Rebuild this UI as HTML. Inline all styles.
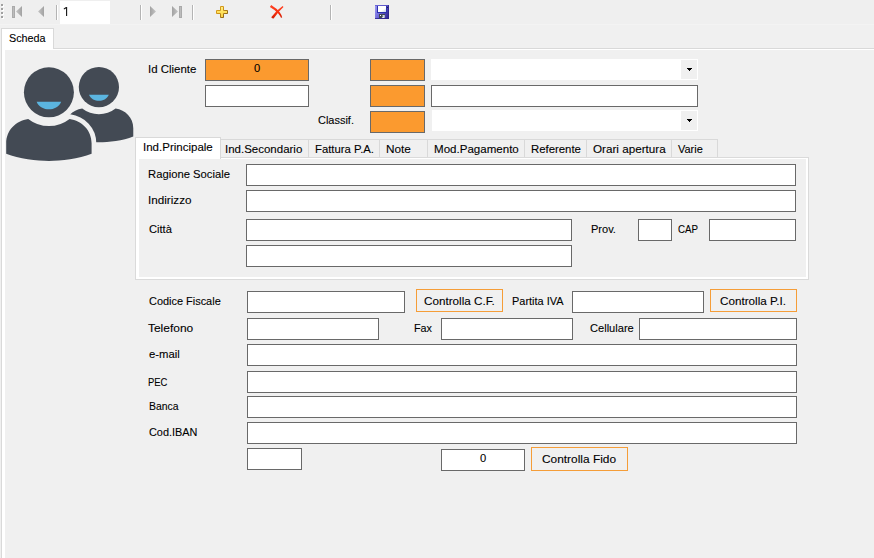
<!DOCTYPE html>
<html>
<head>
<meta charset="utf-8">
<title>Scheda Cliente</title>
<style>
html,body{margin:0;padding:0;}
html{width:874px;height:558px;overflow:hidden;}
body{width:874px;height:558px;overflow:hidden;background:#f0f0f0;position:relative;
  font-family:"Liberation Sans",sans-serif;font-size:11.5px;color:#000;}
.a{position:absolute;box-sizing:border-box;}
.lbl{position:absolute;white-space:nowrap;font-size:11.5px;line-height:20px;height:20px;transform-origin:0 0;color:#000;-webkit-text-stroke:0.1px #000;}
.inp{position:absolute;box-sizing:border-box;background:#fff;border:1px solid #696969;}
.org{position:absolute;box-sizing:border-box;background:#fb9a2f;border:1px solid #696969;}
.btn{position:absolute;box-sizing:border-box;background:#f0f0f0;border:1px solid #f59d38;}
.cmb{position:absolute;box-sizing:border-box;background:#fff;}
.cmb i{position:absolute;right:1px;top:1px;width:16px;bottom:1px;background:#f0f0f0;}
.cmb svg{position:absolute;right:6px;top:9px;}
.tab{position:absolute;box-sizing:border-box;top:139px;height:18px;border-top:1px solid #d9d9d9;border-right:1px solid #d9d9d9;background:#f0f0f0;}
.sep{position:absolute;top:5px;width:1px;height:15px;background:#b4b4b4;box-shadow:1px 0 0 #fff;}
svg{position:absolute;overflow:visible;}
</style>
</head>
<body>
<!-- toolbar -->
<div class="a" id="toolbar" style="left:0;top:0;width:874px;height:25px;background:#efefef;border-bottom:1px solid #f3f3f3;"></div>
<svg id="grip" style="left:0;top:0" width="6" height="24" viewBox="0 0 6 24">
 <g fill="#fff"><rect x="2" y="5" width="2" height="2"/><rect x="2" y="9" width="2" height="2"/><rect x="2" y="13" width="2" height="2"/><rect x="2" y="17" width="2" height="2"/></g>
 <g fill="#a0a0a0"><rect x="1" y="4" width="2" height="2"/><rect x="1" y="8" width="2" height="2"/><rect x="1" y="12" width="2" height="2"/><rect x="1" y="16" width="2" height="2"/></g>
</svg>
<svg id="nav" style="left:0;top:0" width="200" height="24" viewBox="0 0 200 24">
 <defs>
  <linearGradient id="gg" x1="0" y1="0" x2="1" y2="0"><stop offset="0" stop-color="#c4c4c4"/><stop offset="1" stop-color="#a2a2a2"/></linearGradient>
  <linearGradient id="gh" x1="0" y1="0" x2="1" y2="0"><stop offset="0" stop-color="#a2a2a2"/><stop offset="1" stop-color="#c4c4c4"/></linearGradient>
 </defs>
 <rect x="12" y="6" width="3" height="12" fill="#aaa"/><rect x="13" y="7" width="1" height="10" fill="#bcbcbc"/>
 <path d="M16 11.5 L22 6 L22 17 Z" fill="url(#gg)"/>
 <path d="M38 11.5 L44 6 L44 17 Z" fill="url(#gg)"/>
 <path d="M156 11.5 L150 6 L150 17 Z" fill="url(#gh)"/>
 <path d="M178 11.5 L172 6 L172 17 Z" fill="url(#gh)"/>
 <rect x="179" y="6" width="3" height="12" fill="#aaa"/><rect x="180" y="7" width="1" height="10" fill="#bcbcbc"/>
</svg>
<div class="a" style="left:60px;top:1px;width:50px;height:23px;background:#fff;"></div>
<svg id="one" style="left:60px;top:1px" width="20" height="22" viewBox="60 1 20 22"><path d="M66 7h1.15v9h-1.15v-7.55l-2 1.05l-.35-.9z" fill="#1c1c1c"/></svg>
<div class="sep" style="left:56px;"></div>
<div class="sep" style="left:140px;"></div>
<div class="sep" style="left:192px;"></div>
<div class="sep" style="left:330px;"></div>
<svg id="plus" style="left:216px;top:6px" width="12" height="12" viewBox="0 0 12 12">
 <defs><linearGradient id="gp" x1="0" y1="0" x2="0" y2="1"><stop offset="0" stop-color="#fff08a"/><stop offset="0.5" stop-color="#ffe25c"/><stop offset="1" stop-color="#fad043"/></linearGradient>
 <linearGradient id="gpb" x1="0" y1="0" x2="1" y2="1"><stop offset="0" stop-color="#e3a51c"/><stop offset="0.45" stop-color="#c98f1a"/><stop offset="1" stop-color="#6f5216"/></linearGradient></defs>
 <path d="M4.5 .5h3v4h4v3h-4v4h-3v-4h-4v-3h4z" fill="url(#gp)" stroke="url(#gpb)" stroke-width="1" stroke-linejoin="miter"/>
</svg>
<svg id="del" style="left:262px;top:0" width="30" height="24" viewBox="262 0 30 24">
 <defs><linearGradient id="gr" x1="0" y1="0" x2="0" y2="1"><stop offset="0" stop-color="#ff4527"/><stop offset="0.55" stop-color="#f8300f"/><stop offset="1" stop-color="#cf1c02"/></linearGradient></defs>
 <path d="M269.9 7.0 L271.2 4.9 Q276.8 8.4 279.7 12.2 Q282.1 15.4 282.2 17.5 L281.0 17.8 Q280.3 15.8 278.2 13.4 Q275 9.9 269.9 7.0 Z" fill="url(#gr)"/>
 <path d="M282.6 5.9 L283.5 6.9 Q278.2 11.6 273.6 18.4 Q272.6 18.7 271.2 17.2 Q275.4 11 282.6 5.9 Z" fill="url(#gr)"/>
</svg>
<svg id="save" style="left:374px;top:4px" width="16" height="16" viewBox="374 4 16 16">
 <defs><linearGradient id="gs" x1="0" y1="0.2" x2="1" y2="0.6"><stop offset="0" stop-color="#9894f0"/><stop offset="0.45" stop-color="#6a63d6"/><stop offset="1" stop-color="#332a98"/></linearGradient>
 <linearGradient id="gw" x1="0" y1="0" x2="1" y2="1"><stop offset="0" stop-color="#fff"/><stop offset="0.6" stop-color="#fff"/><stop offset="1" stop-color="#c5d2ea"/></linearGradient></defs>
 <rect x="375" y="5" width="14" height="14" fill="url(#gs)"/>
 <rect x="375" y="5" width="14" height="1" fill="#5a53c8" fill-opacity=".7"/>
 <rect x="375" y="18" width="14" height="1" fill="#2a2288" fill-opacity=".8"/>
 <rect x="388" y="5" width="1" height="14" fill="#2a2288" fill-opacity=".7"/>
 <rect x="377" y="6" width="10" height="7" fill="#2b30ab"/>
 <rect x="378" y="6" width="8" height="6" fill="url(#gw)"/>
 <rect x="387" y="7" width="1" height="1" fill="#1d1a5e"/>
 <rect x="379" y="14" width="6" height="4" fill="#3e4852"/>
 <path d="M384.6 15 v3 h-3 z" fill="#e4eaf4"/><rect x="382.5" y="15" width="2" height="1.5" fill="#cfd8e6"/>
 <rect x="380" y="15" width="1" height="1" fill="#fff"/>
</svg>

<!-- outer tab control -->
<div class="a" id="page" style="left:1px;top:48px;width:873px;height:510px;background:#fff;border:1px solid #d9d9d9;border-right:none;border-bottom:none;"></div>
<div class="a" id="panel" style="left:5px;top:50px;width:869px;height:508px;background:#f0f0f0;"></div>
<div class="a" id="tab1" style="left:1px;top:28px;width:53px;height:21px;background:#fff;border:1px solid #d9d9d9;border-bottom:none;"></div>

<!-- users icon -->
<svg id="users" style="left:5px;top:60px;overflow:hidden" width="135" height="105" viewBox="5 60 135 105">
 <defs>
  <g id="person">
   <circle cx="0" cy="0" r="25"/>
   <path d="M-20.7 26.7 C-33 28.5 -42.7 38 -42.7 51 L-42.7 61.5 C-30 66.8 -12 68.6 0 68.6 C12 68.6 30 66.8 42.7 61.5 L42.7 51 C42.7 38 33 28.5 20.7 26.7 A33.7 33.7 0 0 1 -20.7 26.7 Z"/>
  </g>
  <path id="smile" d="M-12.3 9.4 L12.3 9.4 C10 14.8 5 17 0 17 C-5 17 -10 14.8 -12.3 9.4 Z"/>
 </defs>
 <g transform="translate(98.9 87.1) scale(0.805)"><use href="#person" fill="#434a54"/><use href="#smile" fill="#5bb5e0"/></g>
 <g transform="translate(48.9 92.3)"><use href="#person" fill="#f0f0f0" stroke="#f0f0f0" stroke-width="9.4" stroke-linejoin="round"/><use href="#person" fill="#434a54"/><use href="#smile" fill="#5bb5e0"/></g>
</svg>

<!-- header fields -->
<div class="org" style="left:205px;top:59px;width:104px;height:22px;"></div>
<div class="inp" style="left:205px;top:85px;width:104px;height:22px;"></div>
<div class="org" style="left:370px;top:59px;width:55px;height:22px;"></div>
<div class="org" style="left:370px;top:85px;width:55px;height:22px;"></div>
<div class="org" style="left:370px;top:111px;width:55px;height:22px;"></div>
<div class="cmb" style="left:431px;top:59px;width:267px;height:21px;"><i></i><svg width="5" height="3" viewBox="0 0 5 3" shape-rendering="crispEdges"><path d="M0 0h5v1h-1v1h-1v1h-1v-1h-1v-1h-1z" fill="#000"/></svg></div>
<div class="inp" style="left:431px;top:85px;width:267px;height:22px;"></div>
<div class="cmb" style="left:432px;top:110px;width:266px;height:21px;"><i></i><svg width="5" height="3" viewBox="0 0 5 3" shape-rendering="crispEdges"><path d="M0 0h5v1h-1v1h-1v1h-1v-1h-1v-1h-1z" fill="#000"/></svg></div>

<!-- inner tab control -->
<div class="a" id="ipage" style="left:135px;top:157px;width:674px;height:123px;background:#fff;border:1px solid #dadada;"></div>
<div class="a" id="ipanel" style="left:139px;top:159px;width:667px;height:118px;background:#f0f0f0;"></div>
<div class="tab" style="left:220px;width:89px;"></div>
<div class="tab" style="left:309px;width:71px;"></div>
<div class="tab" style="left:380px;width:48px;"></div>
<div class="tab" style="left:428px;width:97px;"></div>
<div class="tab" style="left:525px;width:62px;"></div>
<div class="tab" style="left:587px;width:85px;"></div>
<div class="tab" style="left:672px;width:46px;"></div>
<div class="a" id="itab1" style="left:135px;top:137px;width:86px;height:22px;background:#fff;border:1px solid #d9d9d9;border-bottom:none;"></div>

<div class="inp" style="left:246px;top:164px;width:550px;height:22px;"></div>
<div class="inp" style="left:246px;top:190px;width:550px;height:22px;"></div>
<div class="inp" style="left:246px;top:219px;width:326px;height:22px;"></div>
<div class="inp" style="left:246px;top:245px;width:326px;height:22px;"></div>
<div class="inp" style="left:638px;top:219px;width:34px;height:22px;"></div>
<div class="inp" style="left:709px;top:219px;width:87px;height:22px;"></div>

<!-- lower fields -->
<div class="inp" style="left:247px;top:291px;width:158px;height:22px;"></div>
<div class="btn" style="left:416px;top:289px;width:87px;height:23px;"></div>
<div class="inp" style="left:572px;top:291px;width:132px;height:22px;"></div>
<div class="btn" style="left:710px;top:289px;width:87px;height:23px;"></div>
<div class="inp" style="left:247px;top:318px;width:132px;height:22px;"></div>
<div class="inp" style="left:441px;top:318px;width:132px;height:22px;"></div>
<div class="inp" style="left:639px;top:318px;width:158px;height:22px;"></div>
<div class="inp" style="left:247px;top:344px;width:550px;height:22px;"></div>
<div class="inp" style="left:247px;top:371px;width:550px;height:22px;"></div>
<div class="inp" style="left:247px;top:396px;width:550px;height:22px;"></div>
<div class="inp" style="left:247px;top:422px;width:550px;height:22px;"></div>
<div class="inp" style="left:247px;top:448px;width:55px;height:22px;"></div>
<div class="inp" style="left:441px;top:449px;width:84px;height:22px;"></div>
<div class="btn" style="left:531px;top:447px;width:97px;height:24px;"></div>

<div class="lbl" style="left:9.20px;top:28px;transform:scaleX(0.9383);">Scheda</div>
<div class="lbl" style="left:148.14px;top:59px;transform:scaleX(0.9964);">Id Cliente</div>
<div class="lbl" style="left:317.75px;top:110px;transform:scaleX(0.9533);">Classif.</div>
<div class="lbl" style="left:143.31px;top:137px;transform:scaleX(1.0011);">Ind.Principale</div>
<div class="lbl" style="left:224.84px;top:139px;transform:scaleX(0.9993);">Ind.Secondario</div>
<div class="lbl" style="left:314.80px;top:139px;transform:scaleX(0.9853);">Fattura P.A.</div>
<div class="lbl" style="left:385.76px;top:139px;transform:scaleX(1.0247);">Note</div>
<div class="lbl" style="left:433.57px;top:139px;transform:scaleX(1.0049);">Mod.Pagamento</div>
<div class="lbl" style="left:531.01px;top:139px;transform:scaleX(0.9878);">Referente</div>
<div class="lbl" style="left:592.80px;top:139px;transform:scaleX(1.0159);">Orari apertura</div>
<div class="lbl" style="left:678.04px;top:139px;transform:scaleX(0.9508);">Varie</div>
<div class="lbl" style="left:148.21px;top:164px;transform:scaleX(0.9787);">Ragione Sociale</div>
<div class="lbl" style="left:148.38px;top:190px;transform:scaleX(1.0173);">Indirizzo</div>
<div class="lbl" style="left:148.89px;top:219px;transform:scaleX(0.9687);">Città</div>
<div class="lbl" style="left:591.07px;top:219px;transform:scaleX(0.9597);">Prov.</div>
<div class="lbl" style="left:678.15px;top:219px;transform:scaleX(0.8460);">CAP</div>
<div class="lbl" style="left:149.08px;top:291px;transform:scaleX(0.9508);">Codice Fiscale</div>
<div class="lbl" style="left:424.12px;top:291px;transform:scaleX(1.0162);">Controlla C.F.</div>
<div class="lbl" style="left:512.27px;top:291px;transform:scaleX(0.9515);">Partita IVA</div>
<div class="lbl" style="left:720.29px;top:291px;transform:scaleX(1.0170);">Controlla P.I.</div>
<div class="lbl" style="left:147.84px;top:318px;transform:scaleX(1.0388);">Telefono</div>
<div class="lbl" style="left:414.29px;top:318px;transform:scaleX(0.9393);">Fax</div>
<div class="lbl" style="left:589.57px;top:318px;transform:scaleX(0.9650);">Cellulare</div>
<div class="lbl" style="left:149.49px;top:344px;transform:scaleX(0.9827);">e-mail</div>
<div class="lbl" style="left:147.60px;top:372px;transform:scaleX(0.8199);">PEC</div>
<div class="lbl" style="left:149.33px;top:396px;transform:scaleX(0.9066);">Banca</div>
<div class="lbl" style="left:148.69px;top:422px;transform:scaleX(0.9467);">Cod.IBAN</div>
<div class="lbl" style="left:542.25px;top:449px;transform:scaleX(1.0343);">Controlla Fido</div>
<div class="lbl" style="left:253.59px;top:58px;transform:scaleX(0.9710);">0</div>
<div class="lbl" style="left:479.50px;top:448px;transform:scaleX(0.9700);">0</div>
</body>
</html>
